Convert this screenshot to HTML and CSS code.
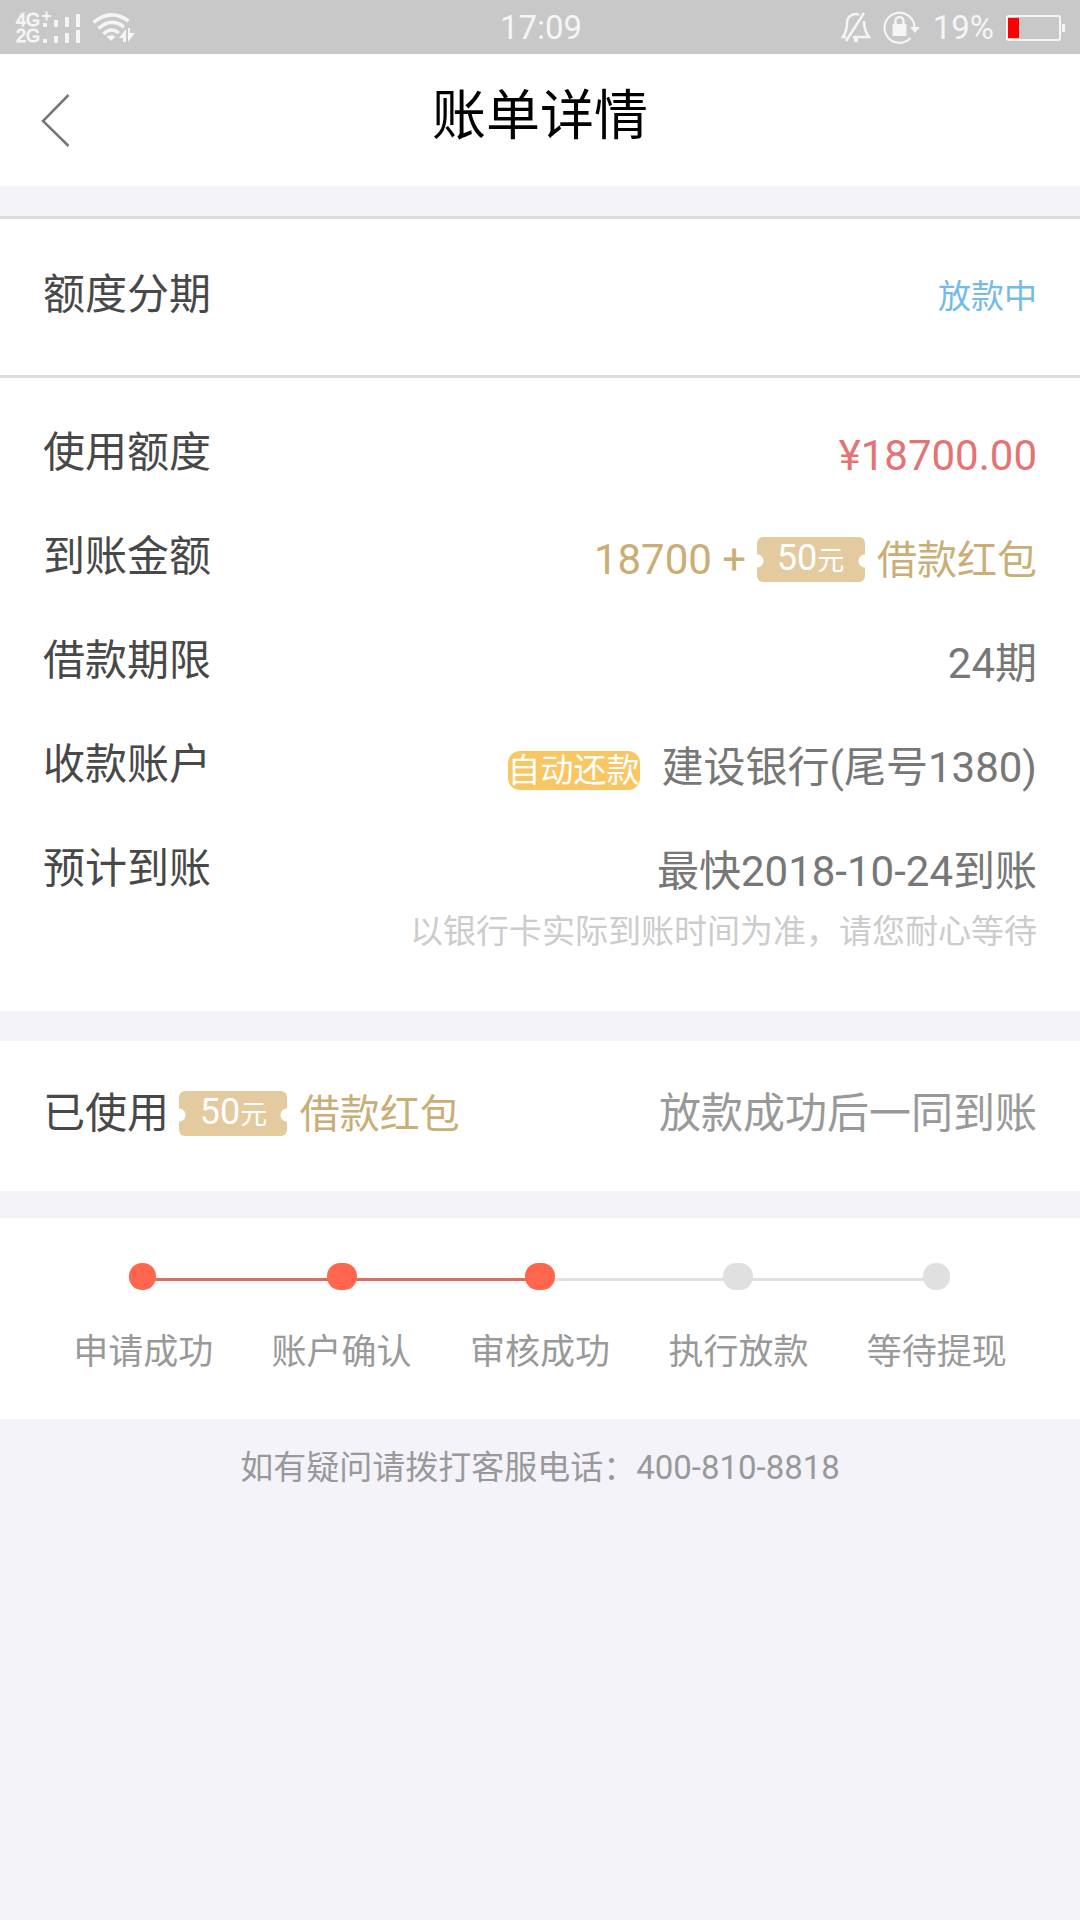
FILE: index.html
```html
<!DOCTYPE html>
<html lang="zh-CN">
<head>
<meta charset="utf-8">
<meta name="viewport" content="width=device-width, initial-scale=1">
<title>账单详情</title>
<link rel="stylesheet" href="styles.css">
</head>
<body>
<div class="status-bar">
  <div class="status-left">
    <div class="signal">
      <div class="signal-text"><span>4G</span><span>2G</span></div>
      <svg class="signal-bars" width="40" height="34" viewBox="26 0 40 34" aria-hidden="true">
        <path d="M26 5h9M30.500 .5v9" stroke="#f5f5f5" stroke-width="2"/>
        <path d="M27 12h4v4h-4zM38 9h4v7h-4zM49 6h4v10h-4zM60 3h4v13h-4zM27 28h4v4h-4zM38 25h4v7h-4zM49 22h4v10h-4zM60 19h4v13h-4z" fill="#f5f5f5"/>
      </svg>
    </div>
    <svg width="44" height="32" viewBox="0 0 44 32" aria-hidden="true">
      <g fill="none" stroke="#f5f5f5" stroke-width="3.500">
        <path d="M1.500 10.500Q19 -4 36.500 9"/>
        <path d="M6.500 16.500Q19 5 32 15"/>
        <path d="M11.500 22Q19 14.500 27 21"/>
      </g>
      <path d="M14.500 24.500q4.500-2.500 9 0L19 29z" fill="#f5f5f5"/>
      <path d="M27 26l7-9v13h-3v-4zM36 16h2v5h5l-7 9z" fill="#f5f5f5"/>
    </svg>
  </div>
  <div class="status-time">17:09</div>
  <div class="status-right">
    <svg class="bell" width="30" height="32" viewBox="0 0 30 32" fill="none" stroke="#f5f5f5" stroke-width="2.500" aria-hidden="true">
      <path d="M18 3Q15 1 11 3Q6 5 6 11Q6 19 2 25H5M23 9Q23 19 28 25H12M23 1L5 29"/>
      <circle cx="15" cy="28" r="1" fill="#f5f5f5"/>
    </svg>
    <svg class="lock" width="38" height="34" viewBox="0 0 38 34" aria-hidden="true">
      <path d="M31.500 16A15 15 0 1 0 27.500 27" fill="none" stroke="#f5f5f5" stroke-width="2.200"/>
      <path d="M27 16h10l-5 6zM9.500 13h14v12h-14z" fill="#f5f5f5"/>
      <path d="M12.500 14v-4a4 4 0 0 1 8 0v4" fill="none" stroke="#f5f5f5" stroke-width="2.500"/>
    </svg>
    <span>19%</span>
    <svg class="battery" width="60" height="26" viewBox="0 0 60 26" aria-hidden="true">
      <rect x="1" y="1" width="53" height="24" rx="2" fill="none" stroke="#f5f5f5" stroke-width="2"/>
      <path d="M56 9h3v8h-3z" fill="#f5f5f5"/>
      <path d="M2 3h11v20H2z" fill="#f00"/>
    </svg>
  </div>
</div>

<header class="header">
  <button class="back" type="button" aria-label="返回">
    <svg width="30" height="54" viewBox="0 0 30 54" fill="none" stroke="#777" stroke-width="2.500" aria-hidden="true"><path d="M27.500 2L2 28L27.500 53"/></svg>
  </button>
  <h1 class="title">账单详情</h1>
</header>

<main>
  <section class="card bill">
    <div class="row bill-head">
      <h2 class="label">额度分期</h2>
      <p class="value state">放款中</p>
    </div>
    <dl class="details">
      <div class="row">
        <dt class="label">使用额度</dt>
        <dd class="value price">¥18700.00</dd>
      </div>
      <div class="row">
        <dt class="label">到账金额</dt>
        <dd class="value gold">18700 + <span class="ticket">50<small class="unit">元</small></span> <span class="bonus">借款红包</span></dd>
      </div>
      <div class="row">
        <dt class="label">借款期限</dt>
        <dd class="value">24期</dd>
      </div>
      <div class="row">
        <dt class="label">收款账户</dt>
        <dd class="value account"><span class="tag">自动还款</span><span>建设银行(尾号1380)</span></dd>
      </div>
      <div class="row">
        <dt class="label">预计到账</dt>
        <dd class="value">最快2018-10-24到账<p class="note">以银行卡实际到账时间为准，请您耐心等待</p></dd>
      </div>
    </dl>
  </section>

  <section class="card row used">
    <p class="label">已使用 <span class="ticket">50<small class="unit">元</small></span> <span class="bonus">借款红包</span></p>
    <p class="used-note">放款成功后一同到账</p>
  </section>

  <ol class="card steps">
    <li class="step done">申请成功</li>
    <li class="step done">账户确认</li>
    <li class="step done">审核成功</li>
    <li class="step">执行放款</li>
    <li class="step">等待提现</li>
  </ol>
</main>

<footer class="footer">如有疑问请拨打客服电话：<a class="phone" href="tel:400-810-8818">400-810-8818</a></footer>
</body>
</html>
```
FILE: styles.css
```css
* {
  box-sizing: border-box;
  margin: 0;
  padding: 0;
}

body {
  min-height: 100vh;
  background: #f4f3fa;
  color: #777;
  font-family: Roboto, "Noto Sans CJK SC", sans-serif;
  font-size: 42px;
  line-height: 60px;
}

/* Status bar */
.status-bar {
  display: grid;
  grid-template-columns: 1fr auto 1fr;
  align-items: center;
  height: 54px;
  padding: 1px 14px 0 16px;
  background: #c8c8c8;
  color: #f5f5f5;
  font-size: 33px;
  line-height: 53px;
}

.status-left,
.status-right,
.signal {
  display: flex;
  align-items: center;
}

.status-left {
  gap: 10px;
}

.status-right {
  justify-content: flex-end;
}

.signal-text {
  display: flex;
  flex-direction: column;
  width: 26px;
  font-family: "Liberation Sans", sans-serif;
  font-size: 18px;
  font-weight: 400;
  line-height: 16px;
  -webkit-text-stroke: 1px #f5f5f5;
}

.bell {
  margin-right: 12px;
}

.lock {
  margin-right: 12px;
}

.battery {
  margin-left: 12px;
}

/* Page header */
.header {
  display: grid;
  grid-template-columns: 1fr auto 1fr;
  align-items: center;
  height: 132px;
  padding: 0 41px;
  background: #fff;
}

.back {
  display: flex;
  justify-self: start;
  border: 0;
  background: none;
}

.title {
  padding-bottom: 6px;
  color: #000;
  font-size: 54px;
  font-weight: 400;
}

/* Cards */
.card {
  background: #fff;
}

.row {
  display: flex;
  justify-content: space-between;
}

.label {
  color: #484848;
  font-size: 42px;
  font-weight: 400;
}

.value {
  padding-top: 3px;
  text-align: right;
}

.bill {
  margin-top: 30px;
  border-top: 3px solid #dcdcdc;
}

.bill-head {
  align-items: center;
  height: 159px;
  padding: 0 43px 4px;
  border-bottom: 3px solid #dcdcdc;
}

.state {
  color: #75bbe6;
  font-size: 33px;
}

.details {
  display: grid;
  gap: 44px;
  padding: 45px 43px 49px;
}

.details .row:not(:last-child) {
  height: 60px;
}

.price {
  color: #e57373;
}

.gold,
.bonus {
  color: #c9ae76;
}

.bonus {
  font-size: 40px;
}

.ticket {
  display: inline-block;
  width: 108px;
  height: 45px;
  margin-right: 2px;
  border-radius: 6px;
  background:
    radial-gradient(circle at 0 24px, transparent 6px, #e3cb9f 7px) left / 50% 100% no-repeat,
    radial-gradient(circle at 100% 24px, transparent 6px, #e3cb9f 7px) right / 50% 100% no-repeat;
  color: #fff;
  font-size: 36px;
  line-height: 42px;
  text-align: center;
  vertical-align: 4px;
}

.unit {
  font-size: 27px;
}

.value.account {
  display: flex;
  align-items: center;
  gap: 22px;
  padding-top: 5px;
}

.tag {
  height: 39px;
  margin-top: 6px;
  border-radius: 12px;
  background: #f8c662;
  color: #fff;
  font-size: 33px;
  line-height: 39px;
}

.note {
  color: #ccc;
  font-size: 33px;
}

.used {
  align-items: center;
  height: 150px;
  margin-top: 30px;
  padding: 0 43px 4px;
}

.used-note {
  color: #999;
}

/* Progress steps */
.steps {
  display: grid;
  grid-template-columns: repeat(5, 1fr);
  margin-top: 27px;
  padding: 45px 44px 36px;
  list-style: none;
}

.step {
  position: relative;
  padding-top: 60px;
  color: #999;
  font-size: 35px;
  text-align: center;
}

.step::before {
  content: "";
  position: absolute;
  top: 0;
  left: calc(50% - 15px);
  z-index: 1;
  width: 30px;
  height: 27px;
  border-radius: 13px;
  background: #e0e0e0;
}

.step:first-child::before,
.step:last-child::before {
  left: calc(50% - 14px);
  width: 27px;
}

.step:not(:first-child)::after {
  content: "";
  position: absolute;
  top: 15px;
  right: 50%;
  width: 100%;
  height: 3px;
  background: #e0e0e0;
}

.step.done::before {
  background: #ff664d;
}

.step.done:not(:first-child)::after {
  background: #de6c5f;
}

/* Footer */
.footer {
  padding: 19px 44px;
  color: #999;
  font-size: 33px;
  text-align: center;
}

.phone {
  color: inherit;
  text-decoration: none;
}
```
